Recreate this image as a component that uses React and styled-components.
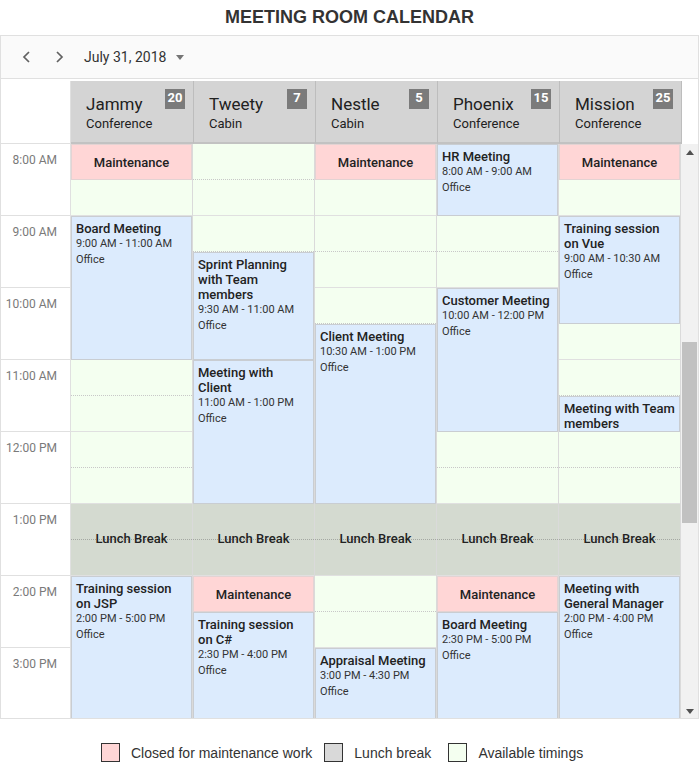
import React from "react";
import styled, { createGlobalStyle } from "styled-components";

const HOUR = 72;
const START = 8;

const GlobalStyle = createGlobalStyle`
  body {
    margin: 0;
    background: #fff;
    font-family: Roboto, "Liberation Sans", sans-serif;
  }
`;

const Page = styled.div`
  width: 699px;
`;

const Title = styled.h1`
  margin: 0;
  padding-top: 7px;
  height: 28px;
  line-height: 20px;
  text-align: center;
  font-family: "Liberation Sans", Arial, sans-serif;
  font-size: 18px;
  font-weight: bold;
  color: #333;
`;

const Scheduler = styled.div`
  border: 1px solid #e0e0e0;
  box-sizing: border-box;
  width: 699px;
`;

const Toolbar = styled.div`
  height: 42px;
  background: #fafafa;
  border-bottom: 1px solid #e0e0e0;
  display: flex;
  align-items: center;
  padding-left: 14px;
`;

const NavButton = styled.button`
  width: 22px;
  height: 28px;
  margin-right: 11px;
  padding: 0;
  border: none;
  background: none;
  display: flex;
  align-items: center;
  justify-content: center;
`;

const DateLabel = styled.div`
  display: flex;
  align-items: center;
  gap: 10px;
  margin-left: 3px;
  font-size: 14px;
  color: #333;
`;

const Grid = styled.div`
  display: grid;
  grid-template-columns: 70px repeat(5, 122px) 17px;
`;

const HeaderRow = styled(Grid)`
  padding-top: 2px;
`;

const Corner = styled.div`
  border-right: 1px solid #e0e0e0;
  border-bottom: 1px solid #e0e0e0;
`;

const ResourceHead = styled.div`
  position: relative;
  height: 63px;
  box-sizing: border-box;
  background: #d4d4d4;
  border-left: ${(p) => (p.$first ? "none" : "1px solid #bdbdbd")};
  border-bottom: 2px solid #c2c2c2;
  padding: 13px 0 0 15px;
`;

const ResourceName = styled.div`
  font-size: 17px;
  line-height: 20px;
  color: #212121;
`;

const ResourceType = styled.div`
  margin-top: 2px;
  font-size: 13px;
  line-height: 16px;
  color: #212121;
`;

const Capacity = styled.div`
  position: absolute;
  top: 8px;
  right: 8px;
  width: 20px;
  height: 20px;
  background: #7b7b7b;
  color: #fff;
  font-size: 13px;
  font-weight: bold;
  line-height: 18px;
  text-align: center;
`;

const Blank = styled.div`
  background: #fff;
  border-left: 1px solid #bdbdbd;
`;

const Body = styled(Grid)`
  height: 574px;
  overflow: hidden;
`;

const TimeColumn = styled.div`
  border-right: 1px solid #e0e0e0;
`;

const TimeCell = styled.div`
  height: ${HOUR}px;
  box-sizing: border-box;
  border-bottom: 1px solid #e0e0e0;
  padding: 9px 13px 0 0;
  text-align: right;
  font-size: 12px;
  line-height: 14px;
  color: #7a7a7a;
`;

const Column = styled.div`
  position: relative;
  border-right: 1px solid #dadada;
`;

const Slot = styled.div`
  height: ${HOUR / 2}px;
  box-sizing: border-box;
  background: ${(p) => (p.$lunch ? "#d4dad0" : "#f4fff0")};
  border-bottom: 1px
    ${(p) =>
      p.$half ? (p.$lunch ? "dotted #a4a8a2" : "dotted #c8c8c8") : "solid #e0e0e0"};
`;

const LunchLabel = styled.div`
  position: absolute;
  left: 0;
  right: 0;
  box-sizing: border-box;
  padding-bottom: 4px;
  display: flex;
  align-items: center;
  justify-content: center;
  font-size: 13px;
  font-weight: 500;
  color: #222;
`;

const Event = styled.div`
  position: absolute;
  left: 0;
  right: 0;
  box-sizing: border-box;
  overflow: hidden;
  border: 1px solid ${(p) => (p.$maint ? "#e3d3d3" : "#c9cdd2")};
  background: ${(p) => (p.$maint ? "#ffd6d6" : "#dcebfd")};
  color: #222;
  padding: ${(p) => (p.$maint ? "0" : "4px 4px 0")};
  display: ${(p) => (p.$maint ? "flex" : "block")};
  align-items: center;
  justify-content: center;
`;

const EventTitle = styled.div`
  font-size: 13px;
  font-weight: 500;
  line-height: 15px;
`;

const EventMeta = styled.div`
  font-size: 11px;
  line-height: 16px;
  color: #333;
`;

const Scrollbar = styled.div`
  background: #f1f1f1;
  display: flex;
  flex-direction: column;
  align-items: center;
`;

const Arrow = styled.div`
  width: 17px;
  height: 17px;
  display: flex;
  align-items: center;
  justify-content: center;
  margin-top: ${(p) => (p.$bottom ? "auto" : "0")};
`;

const Thumb = styled.div`
  width: 15px;
  height: 181px;
  margin-top: 181px;
  background: #c1c1c1;
`;

const Legend = styled.div`
  display: flex;
  align-items: center;
  padding: 24px 0 0 101px;
  font-family: "Liberation Sans", Arial, sans-serif;
  font-size: 14px;
  color: #333;
`;

const LegendItem = styled.div`
  display: flex;
  align-items: center;
  margin-right: ${(p) => p.$gap}px;
`;

const Swatch = styled.span`
  width: 19px;
  height: 19px;
  box-sizing: border-box;
  border: 1px solid #333;
  background: ${(p) => p.$color};
  margin-right: 11px;
`;

const resources = [
  { name: "Jammy", type: "Conference", cap: 20 },
  { name: "Tweety", type: "Cabin", cap: 7 },
  { name: "Nestle", type: "Cabin", cap: 5 },
  { name: "Phoenix", type: "Conference", cap: 15 },
  { name: "Mission", type: "Conference", cap: 25 },
];

const events = [
  [
    { maint: true, start: 8, end: 8.5 },
    { title: "Board Meeting", time: "9:00 AM - 11:00 AM", start: 9, end: 11 },
    { title: "Training session on JSP", time: "2:00 PM - 5:00 PM", start: 14, end: 17 },
  ],
  [
    { title: "Sprint Planning with Team members", time: "9:30 AM - 11:00 AM", start: 9.5, end: 11 },
    { title: "Meeting with Client", time: "11:00 AM - 1:00 PM", start: 11, end: 13 },
    { maint: true, start: 14, end: 14.5 },
    { title: "Training session on C#", time: "2:30 PM - 4:00 PM", start: 14.5, end: 16 },
  ],
  [
    { maint: true, start: 8, end: 8.5 },
    { title: "Client Meeting", time: "10:30 AM - 1:00 PM", start: 10.5, end: 13 },
    { title: "Appraisal Meeting", time: "3:00 PM - 4:30 PM", start: 15, end: 16.5 },
  ],
  [
    { title: "HR Meeting", time: "8:00 AM - 9:00 AM", start: 8, end: 9 },
    { title: "Customer Meeting", time: "10:00 AM - 12:00 PM", start: 10, end: 12 },
    { maint: true, start: 14, end: 14.5 },
    { title: "Board Meeting", time: "2:30 PM - 5:00 PM", start: 14.5, end: 17 },
  ],
  [
    { maint: true, start: 8, end: 8.5 },
    { title: "Training session on Vue", time: "9:00 AM - 10:30 AM", start: 9, end: 10.5 },
    { title: "Meeting with Team members", time: "11:30 AM - 12:00 PM", start: 11.5, end: 12 },
    { title: "Meeting with General Manager", time: "2:00 PM - 4:00 PM", start: 14, end: 16 },
  ],
];

const hours = ["8:00 AM", "9:00 AM", "10:00 AM", "11:00 AM", "12:00 PM", "1:00 PM", "2:00 PM", "3:00 PM"];

const legend = [
  { color: "#ffd6d6", label: "Closed for maintenance work", gap: 12 },
  { color: "#d9d9d9", label: "Lunch break", gap: 17 },
  { color: "#f4fff0", label: "Available timings", gap: 0 },
];

function Chevron({ dir }) {
  const pts = dir === "left" ? "7,1 2,6 7,11" : "2,1 7,6 2,11";
  return (
    <svg width="9" height="12" viewBox="0 0 9 12">
      <polyline points={pts} fill="none" stroke="#616161" strokeWidth="1.7" />
    </svg>
  );
}

function Triangle({ up, color = "#505050" }) {
  return (
    <svg width="8" height="5" viewBox="0 0 8 5">
      <polygon points={up ? "0,5 8,5 4,0" : "0,0 8,0 4,5"} fill={color} />
    </svg>
  );
}

function ResourceColumn({ list }) {
  const slots = [];
  for (let i = 0; i < 16; i++) {
    slots.push(<Slot key={i} $half={i % 2 === 0} $lunch={i === 10 || i === 11} />);
  }
  return (
    <Column>
      {slots}
      <LunchLabel style={{ top: (13 - START) * HOUR, height: HOUR }}>Lunch Break</LunchLabel>
      {list.map((ev, i) => (
        <Event
          key={i}
          $maint={ev.maint}
          style={{ top: (ev.start - START) * HOUR, height: (ev.end - ev.start) * HOUR }}
        >
          {ev.maint ? (
            <EventTitle>Maintenance</EventTitle>
          ) : (
            <>
              <EventTitle>{ev.title}</EventTitle>
              <EventMeta>{ev.time}</EventMeta>
              <EventMeta>Office</EventMeta>
            </>
          )}
        </Event>
      ))}
    </Column>
  );
}

export default function App() {
  return (
    <Page>
      <GlobalStyle />
      <Title>MEETING ROOM CALENDAR</Title>
      <Scheduler>
        <Toolbar>
          <NavButton>
            <Chevron dir="left" />
          </NavButton>
          <NavButton>
            <Chevron dir="right" />
          </NavButton>
          <DateLabel>
            July 31, 2018
            <Triangle color="#757575" />
          </DateLabel>
        </Toolbar>
        <HeaderRow>
          <Corner />
          {resources.map((r, i) => (
            <ResourceHead key={r.name} $first={i === 0}>
              <ResourceName>{r.name}</ResourceName>
              <ResourceType>{r.type}</ResourceType>
              <Capacity>{r.cap}</Capacity>
            </ResourceHead>
          ))}
          <Blank />
        </HeaderRow>
        <Body>
          <TimeColumn>
            {hours.map((h) => (
              <TimeCell key={h}>{h}</TimeCell>
            ))}
          </TimeColumn>
          {events.map((list, i) => (
            <ResourceColumn key={i} list={list} />
          ))}
          <Scrollbar>
            <Arrow>
              <Triangle up />
            </Arrow>
            <Thumb />
            <Arrow $bottom>
              <Triangle />
            </Arrow>
          </Scrollbar>
        </Body>
      </Scheduler>
      <Legend>
        {legend.map((item) => (
          <LegendItem key={item.label} $gap={item.gap}>
            <Swatch $color={item.color} />
            {item.label}
          </LegendItem>
        ))}
      </Legend>
    </Page>
  );
}
